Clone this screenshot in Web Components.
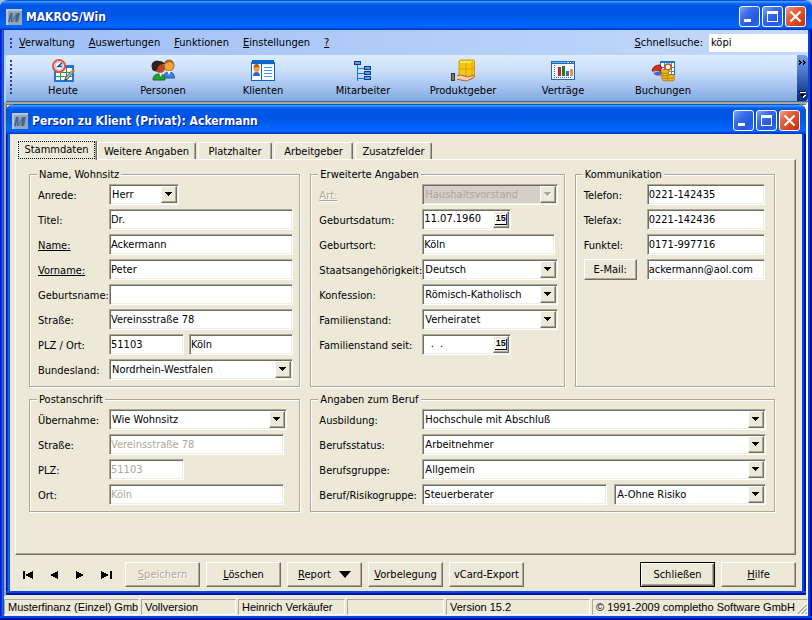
<!DOCTYPE html>
<html lang="de">
<head>
<meta charset="utf-8">
<title>MAKROS/Win</title>
<style>
  html { background: #a3bce8; }
  body {
    margin: 0; min-height: 100vh; display: grid;
    font: 11px/14px "DejaVu Sans Condensed", "Liberation Sans", sans-serif; color: #000;
    --face: #ece9d8; --shade: #aca899; --dark: #716f64;
  }
</style>
</head>
<body>
<xp-window caption="MAKROS/Win">
  <menu-bar></menu-bar>
  <tool-bar></tool-bar>
  <mdi-area>
    <xp-window caption="Person zu Klient (Privat): Ackermann">
      <tab-sheet>
        <group-box caption="Name, Wohnsitz" style="--label:71px">
          <form-row label="Anrede:" kind="select" value="Herr" style="--w:70px"></form-row>
          <form-row label="Titel:" value="Dr."></form-row>
          <form-row label="Name:" value="Ackermann" marked></form-row>
          <form-row label="Vorname:" value="Peter" marked></form-row>
          <form-row label="Geburtsname:" value=""></form-row>
          <form-row label="Straße:" value="Vereinsstraße 78"></form-row>
          <form-row label="PLZ / Ort:" value="51103" style="--w:75px"><form-row bare label="Ort" value="Köln"></form-row></form-row>
          <form-row label="Bundesland:" kind="select" value="Nordrhein-Westfalen"></form-row>
        </group-box>
        <group-box caption="Erweiterte Angaben" style="--label:103px">
          <form-row label="Art:" kind="select" value="Haushaltsvorstand" marked blocked></form-row>
          <form-row label="Geburtsdatum:" kind="date" value="11.07.1960" style="--w:89px"></form-row>
          <form-row label="Geburtsort:" value="Köln" style="--end:3px"></form-row>
          <form-row label="Staatsangehörigkeit:" kind="select" value="Deutsch"></form-row>
          <form-row label="Konfession:" kind="select" value="Römisch-Katholisch"></form-row>
          <form-row label="Familienstand:" kind="select" value="Verheiratet"></form-row>
          <form-row label="Familienstand seit:" kind="date" value="  .  ." style="--w:89px"></form-row>
        </group-box>
        <group-box caption="Kommunikation" style="--label:63px;--end:3px">
          <form-row label="Telefon:" value="0221-142435"></form-row>
          <form-row label="Telefax:" value="0221-142436"></form-row>
          <form-row label="Funktel:" value="0171-997716"></form-row>
          <form-row label="E-Mail:" action value="ackermann@aol.com"></form-row>
        </group-box>
        <group-box caption="Postanschrift" style="--label:71px">
          <form-row label="Übernahme:" kind="select" value="Wie Wohnsitz" style="--end:6px"></form-row>
          <form-row label="Straße:" value="Vereinsstraße 78" locked style="--end:9px"></form-row>
          <form-row label="PLZ:" value="51103" locked style="--w:75px"></form-row>
          <form-row label="Ort:" value="Köln" locked style="--end:9px"></form-row>
        </group-box>
        <group-box caption="Angaben zum Beruf" wide style="--label:103px;--end:2px">
          <form-row label="Ausbildung:" kind="select" value="Hochschule mit Abschluß"></form-row>
          <form-row label="Berufsstatus:" kind="select" value="Arbeitnehmer"></form-row>
          <form-row label="Berufsgruppe:" kind="select" value="Allgemein"></form-row>
          <form-row label="Beruf/Risikogruppe:" value="Steuerberater" style="--w:185px;--gap:7px"><form-row bare label="Risikogruppe" kind="select" value="A-Ohne Risiko"></form-row></form-row>
        </group-box>
      </tab-sheet>
      <command-bar></command-bar>
    </xp-window>
  </mdi-area>
  <status-bar></status-bar>
</xp-window>

<script>
const BASE = `
  *, *::before, *::after { box-sizing: border-box; }
  :host([hidden]) { display: none; }
  button, input, select { font: inherit; color: inherit; margin: 0; padding: 0; border: 0; border-radius: 0; outline: 0; background: none; min-width: 0; }
  svg { display: block; shape-rendering: crispEdges; }
  .raised { background: var(--face); border: 1px solid; border-color: #fff var(--dark) var(--dark) #fff; box-shadow: inset -1px -1px 0 var(--shade); }
  .sunken { background: #fff; border: 1px solid; border-color: var(--shade) #fff #fff var(--shade); box-shadow: inset 1px 1px 0 var(--dark), inset -1px -1px 0 #f1efe2; }
`;
function define(name, render) {
  customElements.define(name, class extends HTMLElement {
    connectedCallback() {
      if (this.shadowRoot) return;
      const root = this.attachShadow({ mode: 'open' });
      root.innerHTML = render(this, BASE);
    }
  });
}
const attr = (el, n) => el.getAttribute(n) || '';
const accel = t => t.replace(/&(.)/, '<u>$1</u>');

/* Window frame with caption bar */
define('xp-window', (el, base) => `<style>${base}
  :host {
    box-sizing: border-box;
    display: flex; flex-direction: column; padding: 0 4px 4px; overflow: hidden; border-radius: 8px 8px 0 0;
    background:
      linear-gradient(#0046e8 50%, #00139c 50%) 0 100% / 100% 4px no-repeat,
      linear-gradient(90deg, #0019cf 25%, #0733d9 25% 50%, #166aee 50% 75%, #0855dd 75%) 0 0 / 4px 100% no-repeat,
      linear-gradient(90deg, #0046e8 50%, #00139c 50%) 100% 0 / 4px 100% no-repeat, var(--face);
  }
  header {
    height: 30px; margin: 0 -4px; padding: 3px 6px 0; display: flex; align-items: center; gap: 4px; color: #fff; flex: none;
    background: linear-gradient(#0a52dc 0 1px, #3c95ff 1px 2px, #1a70f4 3px, #0058e6 5px, #0054e3 14px, #0062f8 22px, #0066ff 26px, #005bf5 28px, #0038c8 29px);
  }
  h1 { flex: 1; margin: 0; font: bold 12px/16px "DejaVu Sans Condensed", "Noto Sans", sans-serif; text-shadow: 1px 1px 0 #0a1883; white-space: nowrap; }
  .b { width: 21px; height: 21px; border: 1px solid #fff; border-radius: 3px; background: linear-gradient(135deg, #7ea4f5, #3a6cec 35%, #2458e0 70%, #2d6cf5); margin-right: 2px; }
  .b:last-child { margin-right: 0; background: linear-gradient(135deg, #f0a088, #e2613c 35%, #d8431c 70%, #c03008); }
  main { flex: 1; display: flex; flex-direction: column; background: var(--face); }
  .caps { display: flex; }
</style>
<header>
  <svg width="16" height="16"><path fill="#93a6b8" d="M0 0h16v16H0z"/><path fill="#b9c5d0" d="M0 0h16v2H0zM0 0h2v16H0z"/>
    <g shape-rendering="auto"><path fill="#46648f" d="M4 4h3v5l3-5h4l-2 9h-3l1-5-3 5H5V8l-1 5H2z"/><path fill="#6b87ab" d="M7 4l0 5 3-5h1l-4 8H6l0-8z"/></g></svg>
  <h1>${attr(el, 'caption')}</h1>
  <div class="caps">
    <button class="b" aria-label="Minimieren"><svg width="19" height="19"><path fill="#fff" d="M4 12h7v3H4z"/></svg></button>
    <button class="b" aria-label="Maximieren"><svg width="19" height="19"><path fill="#fff" fill-rule="evenodd" d="M4 4h11v11H4zM5 7h9v7H5z"/></svg></button>
    <button class="b" aria-label="Schließen"><svg width="19" height="19"><path stroke="#fff" stroke-width="2.2" d="M4.500 4.500l10 10M14.500 4.500l-10 10" shape-rendering="auto"/></svg></button>
  </div>
</header>
<main><slot></slot></main>`);

define('menu-bar', (el, base) => `<style>${base}
  :host { display: flex; height: 25px; align-items: center; padding-left: 6px; background: linear-gradient(90deg, #9ebef5, #c4dafa); }
  .grip { width: 2px; height: 10px; margin-right: 1px; background: repeating-linear-gradient(#27418e 0 2px, transparent 2px 4px); }
  nav { flex: 1; display: flex; }
  nav button { padding: 0 8px; margin-left: -2px; }
  input { width: 99px; height: 18px; background: #fff; padding-left: 2px; margin-left: 6px; }
</style>
<span class="grip"></span>
<nav>${['&Verwaltung', '&Auswertungen', '&Funktionen', '&Einstellungen', '&?'].map(t => `<button>${accel(t)}</button>`).join('')}</nav>
<label for="q"><u>S</u>chnellsuche:</label><input id="q" value="köpi">`);

const ICONS = {
  Heute: `<path fill="#fff" stroke="#1a78d8" stroke-width="2" d="M4 7h18v15H4z"/><path fill="#1a78d8" d="M3 6h20v3H3z"/>
    <path stroke="#22a050" d="M5 13.500h16M5 17.500h16M9.500 9v12M15.500 9v12" /><g shape-rendering="auto"><circle cx="8" cy="7" r="6" fill="#e8f0ff" stroke="#e8503c" stroke-width="2"/><circle cx="8" cy="7" r="4" fill="#fff" stroke="#b4c4e0"/><path fill="none" stroke="#234a90" stroke-width="1.500" d="M11 4L7 7.500h4"/>
    <path stroke="#5a5a5a" stroke-width="3" d="M15 20l6-7"/><path stroke="#b8b8b8" stroke-width="1.500" d="M15 20l6-7"/><path stroke="#e07020" stroke-width="3" d="M21 13l2-2"/><path fill="#334" d="M13 22l1-3 2 2z"/></g>`,
  Personen: `<g shape-rendering="auto"><circle cx="18" cy="7" r="5" fill="#f0a83c" stroke="#a8641c"/><path fill="#a86a24" d="M12.500 6q1-5.500 5.500-5.500t5.500 5.500q-3-3-5.500-3z"/><path fill="#3c80e4" stroke="#1c50b0" d="M12 19q1-6 6-6t5.500 6z"/><path fill="#fff" d="M16 12h4l-2 4z"/>
    <circle cx="6" cy="7" r="5.500" fill="#302020"/><circle cx="9" cy="9" r="5" fill="#b8481c"/><path fill="#302020" d="M1 9q0-7 7-7 4 0 6 3-6 0-7 3-1 4-3 4-3 0-3-3z"/><path fill="#20a030" stroke="#0c7020" d="M2 21q0-6 6-6t6 6z"/><path fill="#f8f8e0" d="M8 14h3l-1 4z"/></g>`,
  Klienten: `<path fill="#0868c8" d="M1 1h22v2h1v19H0V3h1z"/><path fill="#fff" d="M1 5h9v16H1zM11 5h12v16H11z"/><path fill="#d6ecff" d="M1 5h9v1H1zM11 5h12v1H11z"/><path stroke="#4a98e0" d="M13 8.500h8M13 11.500h8M13 14.500h8M13 17.500h8"/>
    <g shape-rendering="auto"><circle cx="5.500" cy="10" r="3" fill="#f0a040"/><path fill="#b05c18" d="M2.500 9q0-4 3-4t3 4q-3-2-6 0z"/><path fill="#2c68d4" d="M2 17q0-4 3.500-4t3.500 4z"/></g>`,
  Mitarbeiter: `<path stroke="#1878d8" d="M6.500 6v16M6 9.500h7M6 14.500h7M6 19.500h7"/><g fill="#5c9cec" stroke="#123c90"><path d="M3.500 2.500h6v3h-6zM13.500 7.500h6v3h-6zM13.500 12.500h6v3h-6zM13.500 17.500h6v3h-6z"/></g>`,
  Produktgeber: `<g shape-rendering="auto"><path fill="#f8c810" stroke="#d09808" d="M8 2l2-1h13l.5 2v15l-3 2H8z"/><path fill="#ffe860" d="M9 2h12l-1 2H9z"/><path fill="none" stroke="#d8a008" d="M8 10h13l2-1M15 4v15M21 3v16"/>
    <path fill="#f8cfa0" stroke="#a8683c" d="M5 17l4-1 5 1 3 1 6-2q2 1-3 4l-5 2-10-2z"/></g><path fill="#303c30" d="M0 14h4v8H0z"/><path fill="#708070" d="M1 15h2v6H1z"/><path fill="#c8d8e8" d="M4 15h2v6H4z"/>`,
  'Verträge': `<path fill="#2068c0" d="M0 2h24v19H0z"/><path fill="#f4f8fc" d="M1 5h22v15H1z"/><path fill="#68b8f0" d="M1 3h14v1H1z"/><path fill="#fff" d="M16 3h2v1h-2zM19 3h1v1h-1z"/><path fill="#f08040" d="M21 3h2v1h-2z"/>
    <path stroke="#567" stroke-dasharray="1 1" d="M3.500 6v13M3 18.500h18"/><path fill="#c82820" d="M7 8h3v9H7z"/><path fill="#148030" d="M11 7h3v10h-3z"/><path fill="#5860b0" d="M15 12h3v5h-3z"/><path fill="#e09850" d="M19 10h3v7h-3z"/>`,
  Buchungen: `<path fill="#fff" stroke="#1878d8" d="M9.500 3.500h14v12h-14z"/><path fill="#1878d8" d="M9 2h15v2H9z"/><path stroke="#38a860" d="M13.500 4v11M20.500 4v11M10 8.500h13M10 12.500h13"/><g shape-rendering="auto"><circle cx="17" cy="8" r="3" fill="#fff" stroke="#e04820" stroke-width="1.500"/>
    <path fill="#d83020" stroke="#901808" d="M1 12q1-6 8-6l2 3-3 4z"/><path fill="#a8c8f0" d="M1 12l8 0 0 3z"/><path fill="#4868c0" d="M2 14l7-2 3 3q-4 3-8 1z"/>
    <g fill="#f0b818" stroke="#9c6804" stroke-width=".7"><ellipse cx="15" cy="20" rx="4" ry="2"/><ellipse cx="14" cy="17.500" rx="4" ry="2"/><ellipse cx="14" cy="15" rx="4" ry="2"/><ellipse cx="14" cy="12.500" rx="4" ry="2"/><ellipse cx="20" cy="20" rx="3.500" ry="2"/><ellipse cx="20" cy="17.500" rx="3.500" ry="2"/></g></g>`
};
define('tool-bar', (el, base) => `<style>${base}
  :host { display: block; background: #bcd3f8; }
  .bar { display: flex; height: 47px; margin-left: 2px; border-radius: 4px 0 0 0; background: linear-gradient(#ddecfe, #cbdffa 35%, #a9c6f0 65%, #81a9e2); border-bottom: 1px solid #3b619c; overflow: hidden; }
  .grip { width: 2px; height: 35px; margin: 5px 1px 0 4px; background: repeating-linear-gradient(#27418e 0 2px, transparent 2px 4px); flex: none; }
  .items { flex: 1; display: flex; }
  .items button { width: 100px; display: flex; flex-direction: column; align-items: center; padding-top: 4px; gap: 1px; }
  .more { width: 11px; display: flex; flex-direction: column; justify-content: space-between; align-items: center; padding: 5px 0 3px; background: linear-gradient(#76a1ea, #3a66b8 50%, #00287d); border-radius: 0 4px 4px 0; }
</style>
<div class="bar"><span class="grip"></span>
<div class="items">${Object.keys(ICONS).map(n => `<button><svg width="24" height="24" fill="none">${ICONS[n]}</svg><span>${n}</span></button>`).join('')}</div>
<button class="more" aria-label="Weitere Schaltflächen"><svg width="8" height="5"><path d="M0 0h1v1h1v1h1v1H2v1H1v1H0V3h1V2H0zM4 0h1v1h1v1h1v1H6v1H5v1H4V3h1V2H4z"/></svg>
<svg width="7" height="7"><path fill="#fff" d="M1 1h6v1H1zM2 4h5L4.500 7z"/><path fill="#000" d="M0 0h6v1H0zM0 3h6L3 6z"/></svg></button></div>`);

define('mdi-area', (el, base) => `<style>${base}
  :host { flex: 1; display: grid; background: #fff; border: 2px solid; border-color: var(--shade) #fff var(--face) var(--shade); box-shadow: inset 1px 1px 0 var(--dark); }
</style><slot></slot>`);

define('tab-sheet', (el, base) => `<style>${base}
  :host { flex: 1; display: flex; flex-direction: column; padding: 6px 6px 0 5px; }
  .tabs { display: flex; align-items: flex-end; height: 20px; margin: 0 0 -1px 2px; gap: 2px; }
  .tabs button { height: 18px; padding: 0; flex: none; white-space: nowrap; background: var(--face); border: 1px solid #fff; border-bottom: 0; border-right-color: var(--dark); box-shadow: inset -1px 0 0 var(--shade); border-radius: 2px 2px 0 0; }
  .tabs .on { height: 20px; width: 80px; margin-right: -2px; position: relative; }
  .on span { display: block; border: 1px dotted #000; margin: 0 1px 1px 0; height: 18px; line-height: 16px; }
  .page { flex: 1; padding: 7px 20px 7px 13px; border: 1px solid; border-color: #fff var(--dark) var(--dark) #fff; box-shadow: inset -1px -1px 0 var(--shade);
    display: grid; grid-template-columns: 271fr 254fr 200fr; column-gap: 10px; row-gap: 5px; align-content: start; }
</style>
<div class="tabs" role="tablist">
  <button class="on" role="tab" aria-selected="true"><span>Stammdaten</span></button>
  <button role="tab" style="width:99px">Weitere Angaben</button><button role="tab" style="width:74px">Platzhalter</button>
  <button role="tab" style="width:79px">Arbeitgeber</button><button role="tab" style="width:77px">Zusatzfelder</button>
</div>
<div class="page"><slot></slot></div>`);

define('group-box', (el, base) => `<style>${base}
  :host { display: grid; min-width: 0; }
  :host([wide]) { grid-column: span 2; }
  fieldset { margin: 0; padding: 3px 6px 6px 8px; min-width: 0; border: 1px solid var(--shade); box-shadow: 1px 1px 0 #fff, inset 1px 1px 0 #fff; }
  legend { padding: 0 2px; background: var(--face); height: 14px; line-height: 16px; margin-left: -1px; }
  .rows { display: flex; flex-direction: column; gap: 4px; }
</style>
<fieldset><legend>${attr(el, 'caption')}</legend><div class="rows"><slot></slot></div></fieldset>`);

/* Label, its control, and a slot for a second control on the same line */
define('form-row', (el, base) => {
  const kind = attr(el, 'kind'), v = attr(el, 'value'), name = attr(el, 'label');
  const dis = el.hasAttribute('blocked') || el.hasAttribute('locked') ? 'disabled' : '';
  const tag = el.hasAttribute('bare') ? `aria-label="${name}"` : el.hasAttribute('action') ? 'aria-labelledby="l"' : '';
  const arrow = el.hasAttribute('blocked')
    ? '<path fill="#fff" d="M1 1h7v1H7v1H6v1H5v1H4V4H3V3H2V2H1z"/><path fill="#aca899" d="M0 0h7v1H6v1H5v1H4v1H3V3H2V2H1V1H0z"/>'
    : '<path d="M0 0h7v1H6v1H5v1H4v1H3V3H2V2H1V1H0z"/>';
  const control = kind === 'select'
    ? `<select id="c" class="sunken" ${tag} ${dis}><option>${v}</option></select><span class="drop raised"><svg width="8" height="5">${arrow}</svg></span>`
    : kind === 'date'
    ? `<span class="date sunken"><input id="c" value="${v}"><button class="raised" aria-label="Kalender"><span>15</span></button></span>`
    : `<input id="c" class="sunken text" value="${v}" ${tag} ${dis}>`;
  const label = el.hasAttribute('bare') ? ''
    : el.hasAttribute('action') ? `<div class="lab"><button id="l" class="raised act">${name}</button></div>`
    : `<label class="lab" for="c">${name}</label>`;
  return `<style>${base}
  :host { display: flex; align-items: center; height: 21px; min-width: 0; padding-right: var(--end, 0); }
  :host([bare]) { flex: 1; --w: auto; --end: 0px; margin-left: var(--gap, 5px); }
  .lab { width: var(--label); flex: none; white-space: nowrap; padding-top: 2px; }
  :host([marked]) .lab { text-decoration: underline; }
  :host([blocked]) .lab { color: var(--shade); text-shadow: 1px 1px 0 #fff; }
  .box { display: grid; height: 21px; min-width: 0; ${el.style.getPropertyValue('--w') ? 'width: var(--w); flex: none;' : 'flex: 1;'} }
  .box > * { grid-area: 1 / 1; }
  .text { padding: 0 1px 1px; width: 100%; height: 21px; }
  select { appearance: none; padding: 0 20px 0 2px; width: 100%; height: 21px; }
  select:disabled, input:disabled { color: var(--shade); opacity: 1; }
  :host([blocked]) select { background: #d4d0c8; }
  .drop { justify-self: end; margin: 2px; width: 16px; height: 17px; display: grid; place-items: center; pointer-events: none; }
  .date { display: flex; padding: 1px; }
  .date input { flex: 1; width: 0; padding-bottom: 1px; white-space: pre; }
  .date button { width: 16px; height: 17px; display: grid; place-items: center; }
  .date button span { font: bold 9px/9px "Liberation Sans", sans-serif; background: #fff; border-bottom: 1px solid #000; border-right: 1px solid #1c2a90; width: 12px; height: 11px; }
  .act { width: 53px; height: 21px; margin-top: -2px; display: block; }
  </style>${label}<span class="box">${control}</span><slot></slot>`;
});

define('command-bar', (el, base) => `<style>${base}
  :host { display: flex; gap: 6px; padding: 7px 6px 4px 5px; }
  .cmd { width: 75px; height: 25px; white-space: nowrap; display: flex; justify-content: center; align-items: center; gap: 8px; flex: none; }
  .nav { flex: none; display: flex; width: 104px; padding-left: 0; }
  .nav button { width: 26px; display: grid; place-items: center; }
  .off { color: var(--shade); text-shadow: 1px 1px 0 #fff; }
  .default { outline: 1px solid #000; outline-offset: -1px; border-color: #000; box-shadow: inset 1px 1px 0 #fff, inset -1px -1px 0 var(--dark), inset -2px -2px 0 var(--shade); }
  .gap { flex: 1; }
</style>
<div class="nav">
  <button aria-label="Erster"><svg width="11" height="8"><path d="M0 0h2v8H0zM10 0v8L2 4z"/></svg></button>
  <button aria-label="Zurück"><svg width="9" height="8"><path d="M8 0v8L0 4z"/></svg></button>
  <button aria-label="Weiter"><svg width="9" height="8"><path d="M0 0v8l8-4z"/></svg></button>
  <button aria-label="Letzter"><svg width="11" height="8"><path d="M0 0v8l8-4zM9 0h2v8H9z"/></svg></button>
</div>
<button class="cmd raised off" disabled><span><u>S</u>peichern</span></button>
<button class="cmd raised"><span><u>L</u>öschen</span></button>
<button class="cmd raised"><span><u>R</u>eport</span><svg width="12" height="7"><path d="M0 0h12L6 7z" shape-rendering="auto"/></svg></button>
<button class="cmd raised"><span><u>V</u>orbelegung</span></button>
<button class="cmd raised"><span>vCard-Export</span></button>
<span class="gap"></span>
<button class="cmd raised default"><span>Schließen</span></button>
<button class="cmd raised"><span><u>H</u>ilfe</span></button>`);

define('status-bar', (el, base) => `<style>${base}
  :host { box-sizing: border-box; display: grid; grid-template-columns: 135fr 95fr 107fr 97fr 144fr 216fr; gap: 2px; padding: 2px 0 1px; height: 19px; background: var(--face); font: 11px/14px "Liberation Sans", sans-serif; }
  span { border: 1px solid; border-color: var(--shade) #fff #fff var(--shade); padding: 0 0 0 3px; white-space: nowrap; min-width: 0; }
  .last { display: flex; justify-content: space-between; align-items: flex-end; }
  b { font-weight: normal; align-self: flex-start; flex: 1; min-width: 0; }
</style>
<span>Musterfinanz (Einzel) Gmb</span><span>Vollversion</span><span>Heinrich Verkäufer</span><span></span><span>Version 15.2</span>
<span class="last"><b>© 1991-2009 completho Software GmbH</b><svg width="11" height="11" style="flex:none"><g shape-rendering="auto"><path stroke="#fff" stroke-width="1.500" d="M0 11L11 0M4 11l7-7M8 11l3-3"/><path stroke="#aca899" stroke-width="1.500" d="M1.500 11L11 1.500M5.500 11L11 5.500M9.500 11L11 9.500"/></g></svg></span>`);
</script>
</body>
</html>
